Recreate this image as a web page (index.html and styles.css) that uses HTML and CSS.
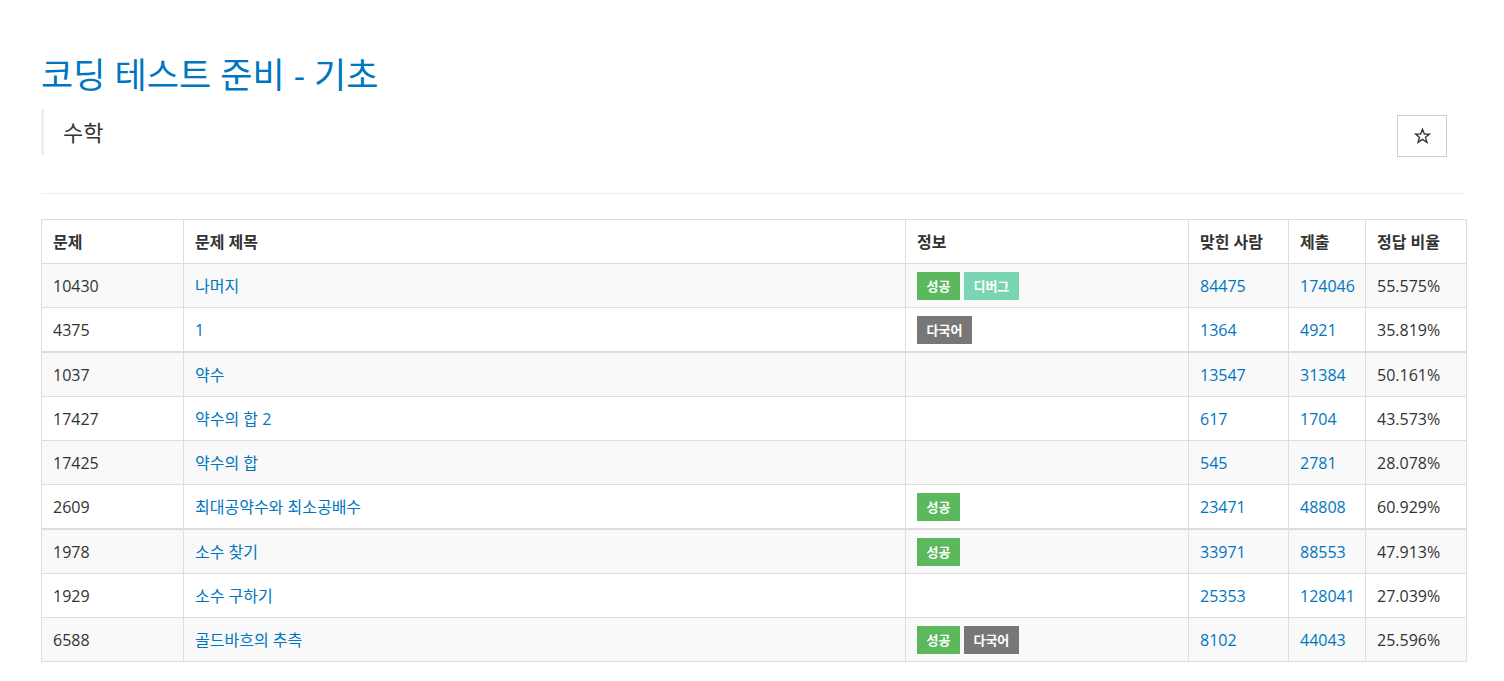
FILE: index.html
```html
<!DOCTYPE html>
<html lang="ko">
<head>
<meta charset="utf-8">
<title>코딩 테스트 준비 - 기초</title>
<link rel="stylesheet" href="styles.css">
</head>
<body>
<div class="container">
  <h1 class="title">코딩 테스트 준비 - 기초</h1>
  <div class="subhead">
    <blockquote class="desc">수학</blockquote>
    <button class="star-btn" type="button" aria-label="즐겨찾기">
      <svg width="17" height="16" viewBox="0 0 17 16"><path d="M8.5 1.2 L10.4 6 L15.6 6.1 L11.5 9.3 L13 14.4 L8.5 11.4 L4 14.4 L5.5 9.3 L1.4 6.1 L6.6 6 Z" fill="none" stroke="#333" stroke-width="1.3" stroke-linejoin="miter"/></svg>
    </button>
  </div>
  <hr class="divider">
  <table class="problems">
    <colgroup>
      <col class="c-id"><col class="c-title"><col class="c-info"><col class="c-ac"><col class="c-sub"><col class="c-rate">
    </colgroup>
    <thead>
      <tr><th>문제</th><th>문제 제목</th><th>정보</th><th>맞힌 사람</th><th>제출</th><th>정답 비율</th></tr>
    </thead>
    <tbody>
      <tr><td>10430</td><td><a href="#">나머지</a></td><td><span class="lbl ok">성공</span><span class="lbl dbg">디버그</span></td><td><a href="#">84475</a></td><td><a href="#">174046</a></td><td>55.575%</td></tr>
      <tr><td>4375</td><td><a href="#">1</a></td><td><span class="lbl ml">다국어</span></td><td><a href="#">1364</a></td><td><a href="#">4921</a></td><td>35.819%</td></tr>
    </tbody>
    <tbody>
      <tr><td>1037</td><td><a href="#">약수</a></td><td></td><td><a href="#">13547</a></td><td><a href="#">31384</a></td><td>50.161%</td></tr>
      <tr><td>17427</td><td><a href="#">약수의 합 2</a></td><td></td><td><a href="#">617</a></td><td><a href="#">1704</a></td><td>43.573%</td></tr>
      <tr><td>17425</td><td><a href="#">약수의 합</a></td><td></td><td><a href="#">545</a></td><td><a href="#">2781</a></td><td>28.078%</td></tr>
      <tr><td>2609</td><td><a href="#">최대공약수와 최소공배수</a></td><td><span class="lbl ok">성공</span></td><td><a href="#">23471</a></td><td><a href="#">48808</a></td><td>60.929%</td></tr>
    </tbody>
    <tbody>
      <tr><td>1978</td><td><a href="#">소수 찾기</a></td><td><span class="lbl ok">성공</span></td><td><a href="#">33971</a></td><td><a href="#">88553</a></td><td>47.913%</td></tr>
      <tr><td>1929</td><td><a href="#">소수 구하기</a></td><td></td><td><a href="#">25353</a></td><td><a href="#">128041</a></td><td>27.039%</td></tr>
      <tr><td>6588</td><td><a href="#">골드바흐의 추측</a></td><td><span class="lbl ok">성공</span><span class="lbl ml">다국어</span></td><td><a href="#">8102</a></td><td><a href="#">44043</a></td><td>25.596%</td></tr>
    </tbody>
  </table>
</div>
</body>
</html>
```
FILE: styles.css
```css
html, body {
  margin: 0;
  padding: 0;
  background: #fff;
}
body {
  font-family: "Open Sans", "Noto Sans CJK KR", sans-serif;
  font-size: 16px;
  color: #333;
}
.container {
  width: 1425px;
  margin-left: 41px;
  padding-top: 54px;
}
.title {
  margin: 0;
  font-size: 35px;
  line-height: 42px;
  font-weight: 400;
  color: #0076c0;
}
.subhead {
  display: flex;
  align-items: flex-start;
  margin-top: 13px;
}
.desc {
  flex: 1;
  margin: 0;
  padding: 10px 19px;
  border-left: 3px solid #eee;
  font-size: 22px;
  line-height: 26px;
}
.star-btn {
  margin: 6px 19px 0 0;
  width: 50px;
  height: 42px;
  padding: 0;
  border: 1px solid #ccc;
  background: #fff;
  display: flex;
  align-items: center;
  justify-content: center;
}
.star-btn svg { display: block; }
.divider {
  margin: 36px 0 25px;
  border: 0;
  border-top: 1px solid #eee;
}
.problems {
  width: 1425px;
  table-layout: fixed;
  border-collapse: collapse;
  border: 1px solid #ddd;
}
.c-id { width: 142px; }
.c-title { width: 722px; }
.c-info { width: 283px; }
.c-ac { width: 100px; }
.c-sub { width: 77px; }
.c-rate { width: 101px; }
.problems th,
.problems td {
  border: 1px solid #ddd;
  padding: 0 11px;
  height: 43px;
  line-height: 22px;
  vertical-align: middle;
  text-align: left;
  white-space: nowrap;
}
.problems th { font-weight: 700; }
.problems tbody + tbody { border-top: 2px solid #ddd; }
.problems tbody tr:nth-of-type(odd) { background: #f9f9f9; }
.problems a {
  color: #0076c0;
  text-decoration: none;
}
.lbl {
  display: inline-block;
  vertical-align: middle;
  height: 28px;
  line-height: 28px;
  padding: 0 9.5px;
  font-size: 13px;
  font-weight: 700;
  color: #fff;
  margin-right: 4px;
}
.lbl.ok { background: #5cb85c; }
.lbl.dbg { background: #7ad5b3; }
.lbl.ml { background: #777; }
```
